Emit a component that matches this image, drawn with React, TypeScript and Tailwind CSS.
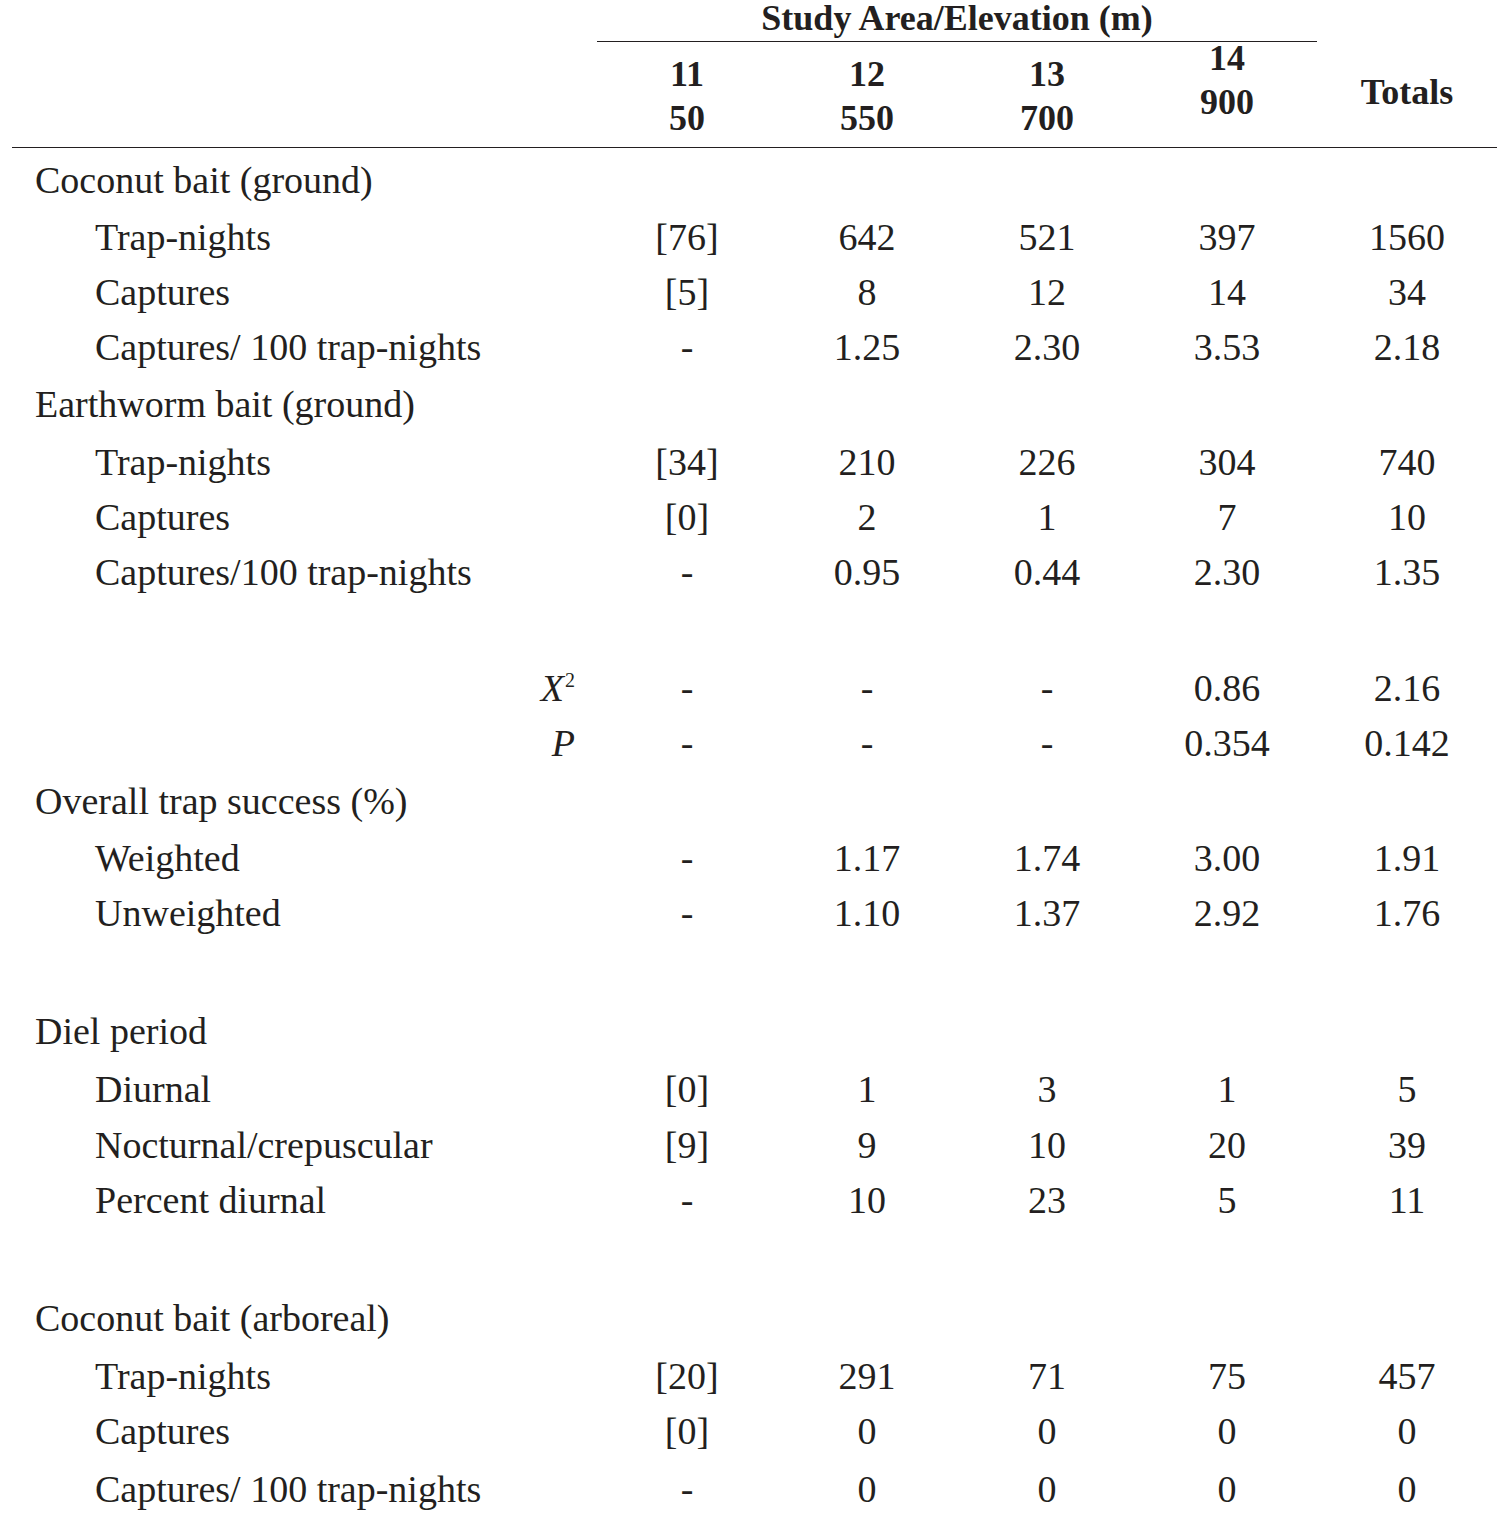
import React from "react";

type Row = {
  kind: "head" | "sub" | "blank" | "stat";
  label?: React.ReactNode;
  vals?: string[];
  h: number;
};

const rows: Row[] = [
  { kind: "head", label: "Coconut bait (ground)", h: 57 },
  { kind: "sub", label: "Trap-nights", vals: ["[76]", "642", "521", "397", "1560"], h: 55 },
  { kind: "sub", label: "Captures", vals: ["[5]", "8", "12", "14", "34"], h: 55 },
  { kind: "sub", label: "Captures/ 100 trap-nights", vals: ["-", "1.25", "2.30", "3.53", "2.18"], h: 57 },
  { kind: "head", label: "Earthworm bait (ground)", h: 58 },
  { kind: "sub", label: "Trap-nights", vals: ["[34]", "210", "226", "304", "740"], h: 55 },
  { kind: "sub", label: "Captures", vals: ["[0]", "2", "1", "7", "10"], h: 55 },
  { kind: "sub", label: "Captures/100 trap-nights", vals: ["-", "0.95", "0.44", "2.30", "1.35"], h: 58 },
  { kind: "blank", h: 58 },
  {
    kind: "stat",
    label: (
      <span>
        <i>X</i>
        <sup className="text-[20px] relative -top-[14px] ml-[1px]">2</sup>
      </span>
    ),
    vals: ["-", "-", "-", "0.86", "2.16"],
    h: 55,
  },
  { kind: "stat", label: <i>P</i>, vals: ["-", "-", "-", "0.354", "0.142"], h: 58 },
  { kind: "head", label: "Overall trap success (%)", h: 57 },
  { kind: "sub", label: "Weighted", vals: ["-", "1.17", "1.74", "3.00", "1.91"], h: 55 },
  { kind: "sub", label: "Unweighted", vals: ["-", "1.10", "1.37", "2.92", "1.76"], h: 59 },
  { kind: "blank", h: 59 },
  { kind: "head", label: "Diel period", h: 58 },
  { kind: "sub", label: "Diurnal", vals: ["[0]", "1", "3", "1", "5"], h: 56 },
  { kind: "sub", label: "Nocturnal/crepuscular", vals: ["[9]", "9", "10", "20", "39"], h: 55 },
  { kind: "sub", label: "Percent diurnal", vals: ["-", "10", "23", "5", "11"], h: 59 },
  { kind: "blank", h: 59 },
  { kind: "head", label: "Coconut bait (arboreal)", h: 58 },
  { kind: "sub", label: "Trap-nights", vals: ["[20]", "291", "71", "75", "457"], h: 55 },
  { kind: "sub", label: "Captures", vals: ["[0]", "0", "0", "0", "0"], h: 58 },
  { kind: "sub", label: "Captures/ 100 trap-nights", vals: ["-", "0", "0", "0", "0"], h: 40 },
];

export default function App() {
  return (
    <div
      className="bg-white text-[#231f20] w-[1501px] min-h-[1521px]"
      style={{ fontFamily: '"Liberation Serif", "Times New Roman", serif' }}
    >
      <div className="ml-[12px] w-[1485px]">
        {/* Header */}
        <div className="border-b border-[#231f20]">
          <div className="grid grid-cols-[585px_720px_180px]">
            <div />
            <div className="h-[42px] border-b border-[#231f20] text-center font-bold text-[36px] leading-[36px]">
              Study Area/Elevation (m)
            </div>
            <div />
          </div>
          <div className="grid grid-cols-[585px_180px_180px_180px_180px_180px] h-[105px] font-bold text-[36px] leading-[44px] text-center">
            <div />
            <div className="pt-[10px]">
              <div>11</div>
              <div>50</div>
            </div>
            <div className="pt-[10px]">
              <div>12</div>
              <div>550</div>
            </div>
            <div className="pt-[10px]">
              <div>13</div>
              <div>700</div>
            </div>
            <div className="-mt-[6px]">
              <div>14</div>
              <div>900</div>
            </div>
            <div className="pt-[28px]">Totals</div>
          </div>
        </div>

        {/* Body */}
        <div className="pt-[12px] text-[38px] leading-[40px]">
          {rows.map((r, i) => (
            <div
              key={i}
              className="grid grid-cols-[585px_180px_180px_180px_180px_180px]"
              style={{ height: r.h }}
            >
              {r.kind === "head" && (
                <div className="col-span-6 pl-[23px] whitespace-nowrap">{r.label}</div>
              )}
              {r.kind === "sub" && (
                <>
                  <div className="pl-[83px] whitespace-nowrap">{r.label}</div>
                  {r.vals!.map((v, j) => (
                    <div key={j} className="text-center">
                      {v}
                    </div>
                  ))}
                </>
              )}
              {r.kind === "stat" && (
                <>
                  <div className="text-right pr-[22px] whitespace-nowrap">{r.label}</div>
                  {r.vals!.map((v, j) => (
                    <div key={j} className="text-center">
                      {v}
                    </div>
                  ))}
                </>
              )}
              {r.kind === "blank" && <div className="col-span-6" />}
            </div>
          ))}
        </div>
      </div>
    </div>
  );
}
